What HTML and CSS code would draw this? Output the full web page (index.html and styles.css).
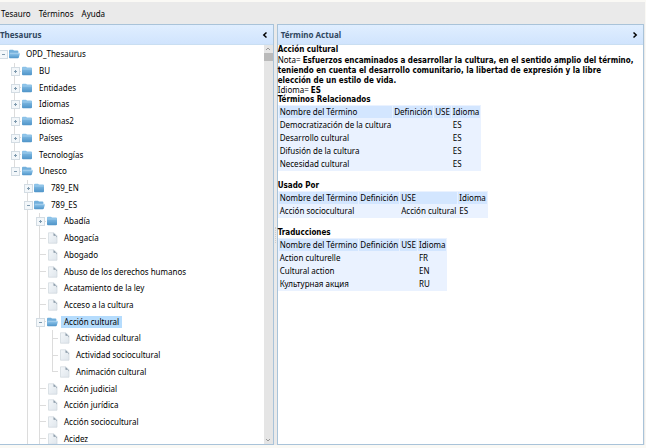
FILE: index.html
```html
<!DOCTYPE html>
<html lang="es">
<head>
<meta charset="utf-8">
<title>Thesaurus</title>
<link rel="stylesheet" href="styles.css">
</head>
<body>
<svg class="sprite" aria-hidden="true">
  <defs>
    <linearGradient id="blue" x1="0" y1="0" x2="0" y2="1"><stop offset="0" stop-color="#8fc6ec"/><stop offset="1" stop-color="#4f94c8"/></linearGradient>
    <linearGradient id="paper" x1="0" y1="0" x2="1" y2="1"><stop offset="0" stop-color="#f4f7fa"/><stop offset="1" stop-color="#dfe6ec"/></linearGradient>
  </defs>
  <symbol id="folder" viewBox="0 0 12 12"><path d="M1 2.700Q1 1.700 2 1.700H5L6 2.500H10Q11 2.500 11 3.500V9.300Q11 10.200 10 10.200H2Q1 10.200 1 9.300Z" fill="url(#blue)"/><path d="M1.300 4H10.700" stroke="#b9dcf3" stroke-width=".6"/></symbol>
  <symbol id="open" viewBox="0 0 12 12"><path d="M1 2.700Q1 1.700 2 1.700H5L6 2.500H9.500Q10.400 2.500 10.400 3.500V9H1Z" fill="#73b0dc"/><path d="M1.600 5.300H12L10.800 9.500Q10.600 10.200 9.800 10.200H1.900Q1 10.200 1 9.300Z" fill="url(#blue)"/><path d="M1.800 5.200H11.800" stroke="#c2e1f5" stroke-width=".6"/></symbol>
  <symbol id="doc" viewBox="0 0 12 12"><path d="M2.500 .8H8L11 3.800V11.200H2.500Z" fill="url(#paper)" stroke="#cfd7dd" stroke-width=".7"/><path d="M7.500 1L11 4.500V5.500L9.800 3.800H7.500Z" fill="#8797a5"/></symbol>
</svg>
<nav class="menubar">
  <button type="button">Tesauro</button>
  <button type="button">Términos</button>
  <button type="button">Ayuda</button>
</nav>
<main class="workspace">
  <section class="panel panel-tree">
    <header class="panel-head">
      <h2>Thesaurus</h2>
      <button type="button" class="collapse" aria-label="Contraer"><svg viewBox="0 0 6 8"><path d="M4.500 1.500L1.800 4L4.500 6.500"/></svg></button>
    </header>
    <div class="tree-body">
      <div class="tree" role="tree">
        <div class="row" role="treeitem" aria-level="1"><i class="cell x minus"></i><svg class="icon"><use href="#open"/></svg><span>OPD_Thesaurus</span></div>
        <div class="row" role="treeitem" aria-level="2"><i class="cell"></i><i class="cell v x plus"></i><svg class="icon"><use href="#folder"/></svg><span>BU</span></div>
        <div class="row" role="treeitem" aria-level="2"><i class="cell"></i><i class="cell v x plus"></i><svg class="icon"><use href="#folder"/></svg><span>Entidades</span></div>
        <div class="row" role="treeitem" aria-level="2"><i class="cell"></i><i class="cell v x plus"></i><svg class="icon"><use href="#folder"/></svg><span>Idiomas</span></div>
        <div class="row" role="treeitem" aria-level="2"><i class="cell"></i><i class="cell v x plus"></i><svg class="icon"><use href="#folder"/></svg><span>Idiomas2</span></div>
        <div class="row" role="treeitem" aria-level="2"><i class="cell"></i><i class="cell v x plus"></i><svg class="icon"><use href="#folder"/></svg><span>Países</span></div>
        <div class="row" role="treeitem" aria-level="2"><i class="cell"></i><i class="cell v x plus"></i><svg class="icon"><use href="#folder"/></svg><span>Tecnologías</span></div>
        <div class="row" role="treeitem" aria-level="2"><i class="cell"></i><i class="cell end x minus"></i><svg class="icon"><use href="#open"/></svg><span>Unesco</span></div>
        <div class="row" role="treeitem" aria-level="3"><i class="cell"></i><i class="cell"></i><i class="cell v x plus"></i><svg class="icon"><use href="#folder"/></svg><span>789_EN</span></div>
        <div class="row" role="treeitem" aria-level="3"><i class="cell"></i><i class="cell"></i><i class="cell v x minus"></i><svg class="icon"><use href="#open"/></svg><span>789_ES</span></div>
        <div class="row" role="treeitem" aria-level="4"><i class="cell"></i><i class="cell"></i><i class="cell v"></i><i class="cell v x plus"></i><svg class="icon"><use href="#folder"/></svg><span>Abadía</span></div>
        <div class="row" role="treeitem" aria-level="4"><i class="cell"></i><i class="cell"></i><i class="cell v"></i><i class="cell v x"></i><svg class="icon"><use href="#doc"/></svg><span>Abogacía</span></div>
        <div class="row" role="treeitem" aria-level="4"><i class="cell"></i><i class="cell"></i><i class="cell v"></i><i class="cell v x"></i><svg class="icon"><use href="#doc"/></svg><span>Abogado</span></div>
        <div class="row" role="treeitem" aria-level="4"><i class="cell"></i><i class="cell"></i><i class="cell v"></i><i class="cell v x"></i><svg class="icon"><use href="#doc"/></svg><span>Abuso de los derechos humanos</span></div>
        <div class="row" role="treeitem" aria-level="4"><i class="cell"></i><i class="cell"></i><i class="cell v"></i><i class="cell v x"></i><svg class="icon"><use href="#doc"/></svg><span>Acatamiento de la ley</span></div>
        <div class="row" role="treeitem" aria-level="4"><i class="cell"></i><i class="cell"></i><i class="cell v"></i><i class="cell v x"></i><svg class="icon"><use href="#doc"/></svg><span>Acceso a la cultura</span></div>
        <div class="row selected" role="treeitem" aria-level="4" aria-selected="true"><i class="cell"></i><i class="cell"></i><i class="cell v"></i><i class="cell v x minus"></i><svg class="icon"><use href="#open"/></svg><span>Acción cultural</span></div>
        <div class="row" role="treeitem" aria-level="5"><i class="cell"></i><i class="cell"></i><i class="cell v"></i><i class="cell v"></i><i class="cell v x"></i><svg class="icon"><use href="#doc"/></svg><span>Actividad cultural</span></div>
        <div class="row" role="treeitem" aria-level="5"><i class="cell"></i><i class="cell"></i><i class="cell v"></i><i class="cell v"></i><i class="cell v x"></i><svg class="icon"><use href="#doc"/></svg><span>Actividad sociocultural</span></div>
        <div class="row" role="treeitem" aria-level="5"><i class="cell"></i><i class="cell"></i><i class="cell v"></i><i class="cell v"></i><i class="cell end x"></i><svg class="icon"><use href="#doc"/></svg><span>Animación cultural</span></div>
        <div class="row" role="treeitem" aria-level="4"><i class="cell"></i><i class="cell"></i><i class="cell v"></i><i class="cell v x"></i><svg class="icon"><use href="#doc"/></svg><span>Acción judicial</span></div>
        <div class="row" role="treeitem" aria-level="4"><i class="cell"></i><i class="cell"></i><i class="cell v"></i><i class="cell v x"></i><svg class="icon"><use href="#doc"/></svg><span>Acción jurídica</span></div>
        <div class="row" role="treeitem" aria-level="4"><i class="cell"></i><i class="cell"></i><i class="cell v"></i><i class="cell v x"></i><svg class="icon"><use href="#doc"/></svg><span>Acción sociocultural</span></div>
        <div class="row" role="treeitem" aria-level="4"><i class="cell"></i><i class="cell"></i><i class="cell v"></i><i class="cell v x"></i><svg class="icon"><use href="#doc"/></svg><span>Acidez</span></div>
      </div>
      <div class="scrollbar" aria-hidden="true">
        <svg viewBox="0 0 8 8"><path d="M2 5L4 3L6 5"/></svg>
        <div class="thumb"></div>
        <svg class="down" viewBox="0 0 8 8"><path d="M2 3L4 5L6 3"/></svg>
      </div>
    </div>
  </section>
  <div class="splitter"><i class="grip"></i></div>
  <section class="panel panel-term">
    <header class="panel-head">
      <h2>Término Actual</h2>
      <button type="button" class="collapse" aria-label="Expandir"><svg viewBox="0 0 6 8"><path d="M1.500 1.500L4.200 4L1.500 6.500"/></svg></button>
    </header>
    <div class="term">
      <h3>Acción cultural</h3>
      <p>Nota= <b>Esfuerzos encaminados a desarrollar la cultura, en el sentido amplio del término, teniendo en cuenta el desarrollo comunitario, la libertad de expresión y la libre elección de un estilo de vida.</b></p>
      <p>Idioma= <b>ES</b></p>
      <h3>Términos Relacionados</h3>
      <table>
        <thead><tr><th>Nombre del Término</th><th>Definición</th><th>USE</th><th>Idioma</th></tr></thead>
        <tbody>
          <tr><td>Democratización de la cultura</td><td></td><td></td><td>ES</td></tr>
          <tr><td>Desarrollo cultural</td><td></td><td></td><td>ES</td></tr>
          <tr><td>Difusión de la cultura</td><td></td><td></td><td>ES</td></tr>
          <tr><td>Necesidad cultural</td><td></td><td></td><td>ES</td></tr>
        </tbody>
      </table>
      <h3>Usado Por</h3>
      <table>
        <thead><tr><th>Nombre del Término</th><th>Definición</th><th>USE</th><th>Idioma</th></tr></thead>
        <tbody>
          <tr><td>Acción sociocultural</td><td></td><td>Acción cultural</td><td>ES</td></tr>
        </tbody>
      </table>
      <h3>Traducciones</h3>
      <table>
        <thead><tr><th>Nombre del Término</th><th>Definición</th><th>USE</th><th>Idioma</th></tr></thead>
        <tbody>
          <tr><td>Action culturelle</td><td></td><td></td><td>FR</td></tr>
          <tr><td>Cultural action</td><td></td><td></td><td>EN</td></tr>
          <tr><td>Культурная акция</td><td></td><td></td><td>RU</td></tr>
        </tbody>
      </table>
    </div>
  </section>
</main>
</body>
</html>
```
FILE: styles.css
```css
* { box-sizing: border-box; }

body {
  margin: 0;
  height: 100vh;
  padding: 2px 1px 3px 0;
  display: flex;
  flex-direction: column;
  overflow: hidden;
  background: #faf9f5;
  color: #000;
  font: 8px/10px "Noto Sans", "DejaVu Sans", sans-serif;
}

h2, h3, p { margin: 0; font-size: inherit; }

.term { padding-right: 9px; }
.term h3, .term b { font-family: "DejaVu Sans Condensed", "DejaVu Sans", sans-serif; }
.term b { line-height: 8px; }

button {
  padding: 0;
  border: 0;
  background: none;
  color: inherit;
  font: inherit;
}

.sprite { position: absolute; width: 0; height: 0; }

.menubar {
  flex: none;
  display: flex;
  gap: 8px;
  height: 22px;
  padding: 2px 1px 0;
  background: #eaeaea;
}

.workspace {
  flex: 1;
  min-height: 0;
  display: flex;
  padding-right: 1px;
  background: #eaeaea;
}

.panel {
  min-width: 0;
  display: flex;
  flex-direction: column;
  border: 1px solid #a9c3d9;
  background: #fff;
}

.panel-tree { flex: 0 0 42.500%; border-left: 0; }
.panel-term { flex: 1; }

.panel-head {
  flex: none;
  display: flex;
  align-items: center;
  justify-content: space-between;
  height: 20px;
  padding: 0 5px 0 0;
  border-bottom: 1px solid #c9def2;
  background: linear-gradient(#e0eeff, #d0e4fd);
  color: #30475f;
}

.panel-term .panel-head { padding-left: 3px; }

.collapse { width: 6px; height: 8px; }
.collapse svg { display: block; width: 6px; height: 8px; }
.collapse path { fill: none; stroke: #000; stroke-width: 1.5; }

.splitter {
  flex: 0 0 3px;
  display: flex;
  align-items: center;
  justify-content: center;
  background: #eaeaea;
}

.grip { height: 16px; border-left: 1px dotted #ccc; }

.tree-body {
  flex: 1;
  min-height: 0;
  display: flex;
  overflow: hidden;
}

.tree {
  flex: 1;
  display: grid;
  grid-auto-rows: minmax(0, 1fr);
  margin: 1px 0 -3px -4px;
}

.row { display: flex; align-items: center; white-space: nowrap; }

.cell {
  flex: none;
  align-self: stretch;
  position: relative;
  width: 12px;
}

.cell:nth-of-type(even) { width: 13px; }

.v::before, .end::before {
  content: "";
  position: absolute;
  top: 0;
  bottom: 0;
  left: 6px;
  border-left: 1px solid #dcdcdc;
}

.end::before { bottom: 50%; }

.x {
  background: linear-gradient(#dcdcdc, #dcdcdc) right center / 6px 1px no-repeat;
}

.plus::after, .minus::after {
  content: "";
  position: absolute;
  top: calc(50% - 4px);
  left: 3px;
  width: 7px;
  height: 7px;
  border: 1px solid #d3dce3;
  background: linear-gradient(#7f9aae, #7f9aae) center / 3px 1px no-repeat, #f3f7fa;
}

.plus::after {
  background: linear-gradient(#7f9aae, #7f9aae) center / 3px 1px no-repeat,
    linear-gradient(#7f9aae, #7f9aae) center / 1px 3px no-repeat, #f3f7fa;
}

.icon { flex: none; width: 12px; height: 12px; margin-right: 3px; }

.row span { padding: 1px 3px; }
.selected span { background: #b5dcfd; }

.scrollbar {
  flex: 0 0 9px;
  display: flex;
  flex-direction: column;
  background: #e5e5e5;
}

.scrollbar svg { display: block; width: 8px; height: 8px; }
.scrollbar path { fill: none; stroke: #999; stroke-width: 1; }
.scrollbar .down { margin-top: auto; }
.thumb { height: 8px; background: #bababa; }

.term h3:nth-of-type(n+3) { margin-top: 10px; }

table {
  border-spacing: 1px;
  background: #eaf2ff;
}

th, td { padding: 1px; font-weight: normal; text-align: left; }
th { background: #d3e6ff; }
```
